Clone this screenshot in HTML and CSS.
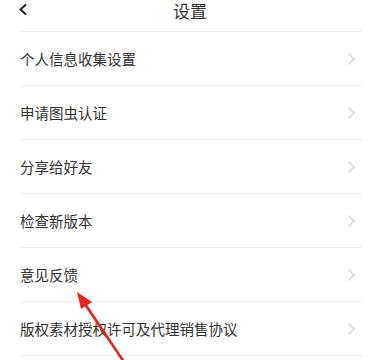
FILE: index.html
```html
<!DOCTYPE html>
<html lang="zh-CN">
<head>
    <meta charset="UTF-8">
    <meta name="viewport" content="width=device-width, initial-scale=1.0">
    <title>设置</title>
    <link rel="stylesheet" href="styles.css">
</head>
<body>
<div class="page">
    <!-- Top bar -->
    <div class="top-bar">
        <svg class="back" width="11" height="13" viewBox="0 0 11 13">
            <polyline points="8,1.5 2.5,6.5 8,11.5" fill="none" stroke="#222" stroke-width="2"/>
        </svg>
        <div class="title">设置</div>
    </div>

    <ul class="settings-list">
        <li class="settings-item"><span>个人信息收集设置</span><i class="chevron"></i></li>
        <li class="settings-item"><span>申请图虫认证</span><i class="chevron"></i></li>
        <li class="settings-item"><span>分享给好友</span><i class="chevron"></i></li>
        <li class="settings-item"><span>检查新版本</span><i class="chevron"></i></li>
        <li class="settings-item"><span>意见反馈</span><i class="chevron"></i></li>
        <li class="settings-item"><span>版权素材授权许可及代理销售协议</span><i class="chevron"></i></li>
    </ul>

    <!-- Annotation arrow -->
    <svg class="annotation" width="369" height="360" viewBox="0 0 369 360">
        <line x1="124" y1="362" x2="83" y2="301" stroke="#e5241f" stroke-width="2.6"/>
        <polygon points="77,292 92,302 81,309" fill="#e5241f"/>
    </svg>
</div>
</body>
</html>
```

FILE: styles.css
```css
body {
    margin: 0;
    background: #fff;
    font-family: 'Noto Sans CJK SC', 'Noto Sans', sans-serif;
    color: #333;
}

.page {
    position: relative;
    width: 369px;
    height: 360px;
    overflow: hidden;
}

.top-bar {
    position: relative;
    height: 31px;
    margin: 0 7px 0 20px;
    border-bottom: 1px solid #f0f0f0;
}

.back {
    position: absolute;
    left: -2px;
    top: 3px;
}

.title {
    text-align: center;
    font-size: 17px;
    line-height: 19px;
    padding-top: 1px;
    color: #333;
    padding-left: 11px;
    margin-left: -20px;
    margin-right: -7px;
}

.settings-list {
    list-style: none;
    margin: 0 7px 0 20px;
    padding: 0;
}

.settings-item {
    display: flex;
    align-items: center;
    justify-content: space-between;
    height: 53px;
    border-bottom: 1px solid #f0f0f0;
    font-size: 14.5px;
    color: #333;
}

.chevron {
    width: 7px;
    height: 7px;
    margin-right: 9px;
    border-top: 1px solid #c8c8c8;
    border-right: 1px solid #c8c8c8;
    transform: rotate(45deg);
}

.annotation {
    position: absolute;
    left: 0;
    top: 0;
}
```
